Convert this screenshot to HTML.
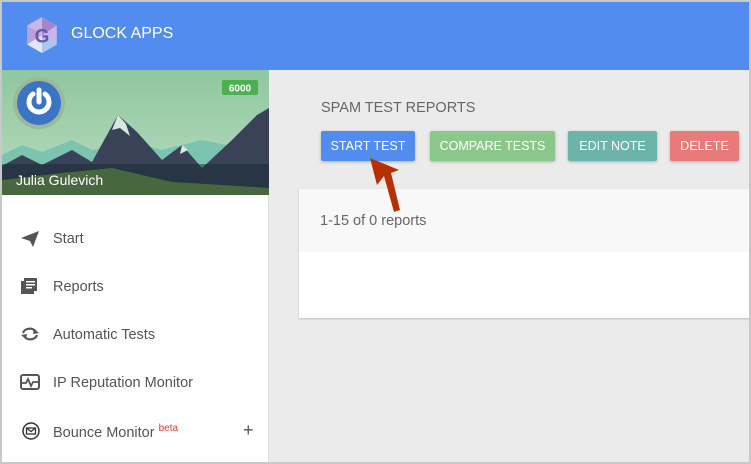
<!DOCTYPE html>
<html><head><style>
*{margin:0;padding:0;box-sizing:border-box}
body{width:751px;height:464px;overflow:hidden;background:#c8c8c8;font-family:"Liberation Sans",sans-serif;position:relative}
.frame{position:absolute;left:2px;top:2px;right:2px;bottom:2px;background:#ebebeb;overflow:hidden}
.hdr{position:absolute;left:0;top:0;width:100%;height:68px;background:#528cee}
.hdr .t{position:absolute;left:69px;top:23px;color:#fff;font-size:16px}
.side{position:absolute;left:0;top:68px;width:267px;bottom:0;background:#fff;border-right:1px solid #ddd}
.item{position:absolute;left:51px;font-size:14.5px;color:#555}
.ic{position:absolute;left:18px}
.btn{position:absolute;top:129px;height:30px;color:#fff;font-size:12.5px;line-height:30px;text-align:center;border-radius:2px;box-shadow:0 1px 3px rgba(0,0,0,.25)}
</style></head><body>
<div class="frame">
<div class="hdr">
<svg style="position:absolute;left:23px;top:14px" width="34" height="38" viewBox="0 0 32 36"><polygon points="16,1 30,9 30,27 16,35 2,27 2,9" fill="#c8b8e8"/><polygon points="16,1 30,9 16,18" fill="#9f86cf"/><polygon points="2,9 16,18 2,27" fill="#b8a0dc"/><polygon points="2,27 16,35 16,18" fill="#e0e8f8"/><polygon points="30,27 16,35 16,18" fill="#a8c8ee"/><text x="16" y="25" font-size="18" font-weight="bold" text-anchor="middle" fill="#6a55a8" font-family="Liberation Sans">G</text></svg>
<div class="t">GLOCK APPS</div>
</div>
<div class="side">
<svg width="267" height="125" viewBox="0 0 267 125" style="position:absolute;left:0;top:0">
<defs><linearGradient id="sk" x1="0" y1="0" x2="0" y2="1"><stop offset="0" stop-color="#8fc79f"/><stop offset="1" stop-color="#b8dcc0"/></linearGradient></defs>
<rect width="267" height="125" fill="url(#sk)"/>
<polygon points="0,85 20,75 40,82 70,70 90,80 130,72 160,80 200,70 240,78 267,72 267,125 0,125" fill="#7cc4b0"/>
<polygon points="0,125 0,96 20,85 40,95 70,80 90,92 116,45 135,62 160,90 180,75 200,98 230,70 255,45 267,38 267,125" fill="#3a4258"/>
<polygon points="116,45 124,54 128,66 118,58 110,60" fill="#d8e8e0"/>
<polygon points="180,75 186,80 178,84" fill="#d8e8e0"/>
<polygon points="0,110 60,103 110,98 170,112 220,115 267,118 267,125 0,125" fill="#7aa84a"/>
<rect y="94" width="267" height="31" fill="rgba(20,40,50,.5)"/>
<circle cx="37" cy="33" r="26" fill="#9ab89a"/>
<circle cx="37" cy="33" r="22" fill="#3a74c2"/>
<path d="M31 24 A10 10 0 1 0 43 24" stroke="#fff" stroke-width="5" fill="none" stroke-linecap="round"/>
<line x1="37" y1="20" x2="37" y2="32" stroke="#fff" stroke-width="5" stroke-linecap="round"/>
<rect x="220" y="10" width="36" height="15" rx="2" fill="#4caf50"/>
<text x="238" y="21.5" font-size="10" font-weight="bold" fill="#fff" text-anchor="middle" font-family="Liberation Sans">6000</text>
<text x="14" y="115" font-size="14" fill="#fff" font-family="Liberation Sans">Julia Gulevich</text>
</svg>
<svg class="ic" style="top:160px" width="20" height="18" viewBox="0 0 20 18"><polygon points="1,8 19,1 13,17 10,11" fill="#555"/></svg>
<div class="item" style="top:161px">Start</div>
<svg class="ic" style="top:207px" width="18" height="18" viewBox="0 0 18 18"><rect x="4" y="1" width="13" height="13" fill="#555"/><rect x="1" y="4" width="3" height="13" fill="#555"/><rect x="1" y="14" width="13" height="3" fill="#555"/><rect x="6" y="4" width="9" height="1.5" fill="#fff"/><rect x="6" y="7" width="9" height="1.5" fill="#fff"/><rect x="6" y="10" width="6" height="1.5" fill="#fff"/></svg>
<div class="item" style="top:209px">Reports</div>
<svg class="ic" style="top:256px" width="20" height="16" viewBox="0 0 20 16"><path d="M3 7 A7 6 0 0 1 16 6 M17 9 A7 6 0 0 1 4 10" stroke="#555" stroke-width="2.2" fill="none"/><polygon points="14,3 19,7 13,8" fill="#555"/><polygon points="6,13 1,9 7,8" fill="#555"/></svg>
<div class="item" style="top:257px">Automatic Tests</div>
<svg class="ic" style="top:304px" width="20" height="16" viewBox="0 0 20 16"><rect x="1" y="1" width="18" height="14" rx="2" stroke="#555" stroke-width="2" fill="none"/><path d="M1 9 H6 L8 5 L11 12 L13 8 H19" stroke="#555" stroke-width="1.8" fill="none"/></svg>
<div class="item" style="top:305px">IP Reputation Monitor</div>
<svg class="ic" style="top:351px" width="20" height="20" viewBox="0 0 20 20"><circle cx="11" cy="10" r="8" stroke="#333" stroke-width="1.5" fill="none"/><rect x="6.5" y="7" width="9" height="6" stroke="#333" stroke-width="1.3" fill="none"/><path d="M6.5 7 L11 10.5 L15.5 7" stroke="#333" stroke-width="1.3" fill="none"/></svg>
<div class="item" style="top:353px">Bounce Monitor <sup style="color:#e53935;font-size:10px">beta</sup></div>
<div style="position:absolute;left:241px;top:350px;font-size:18px;color:#555">+</div>
</div>
<div style="position:absolute;left:319px;top:98px;font-size:14.5px;color:#666">SPAM TEST REPORTS</div>
<div class="btn" style="left:319px;width:94px;background:#518cee">START TEST</div>
<div class="btn" style="left:428px;width:125px;background:#8bc78a">COMPARE TESTS</div>
<div class="btn" style="left:566px;width:89px;background:#6cb4aa">EDIT NOTE</div>
<div class="btn" style="left:668px;width:69px;background:#e87a7a">DELETE</div>
<div style="position:absolute;left:297px;top:187px;width:460px;height:129px;background:#fff;box-shadow:0 1px 2px rgba(0,0,0,.2)">
<div style="height:63px;background:#f8f8f8"></div>
<div style="position:absolute;left:21px;top:24px;font-size:14.5px;color:#666">1-15 of 0 reports</div>
</div>
<svg style="position:absolute;left:0;top:0" width="751" height="464"><path d="M368 156 L397 168 L389 171 L398 208 L392 210 L382 174 L375 183 Z" fill="#b83000"/></svg>
</div>
</body></html>
